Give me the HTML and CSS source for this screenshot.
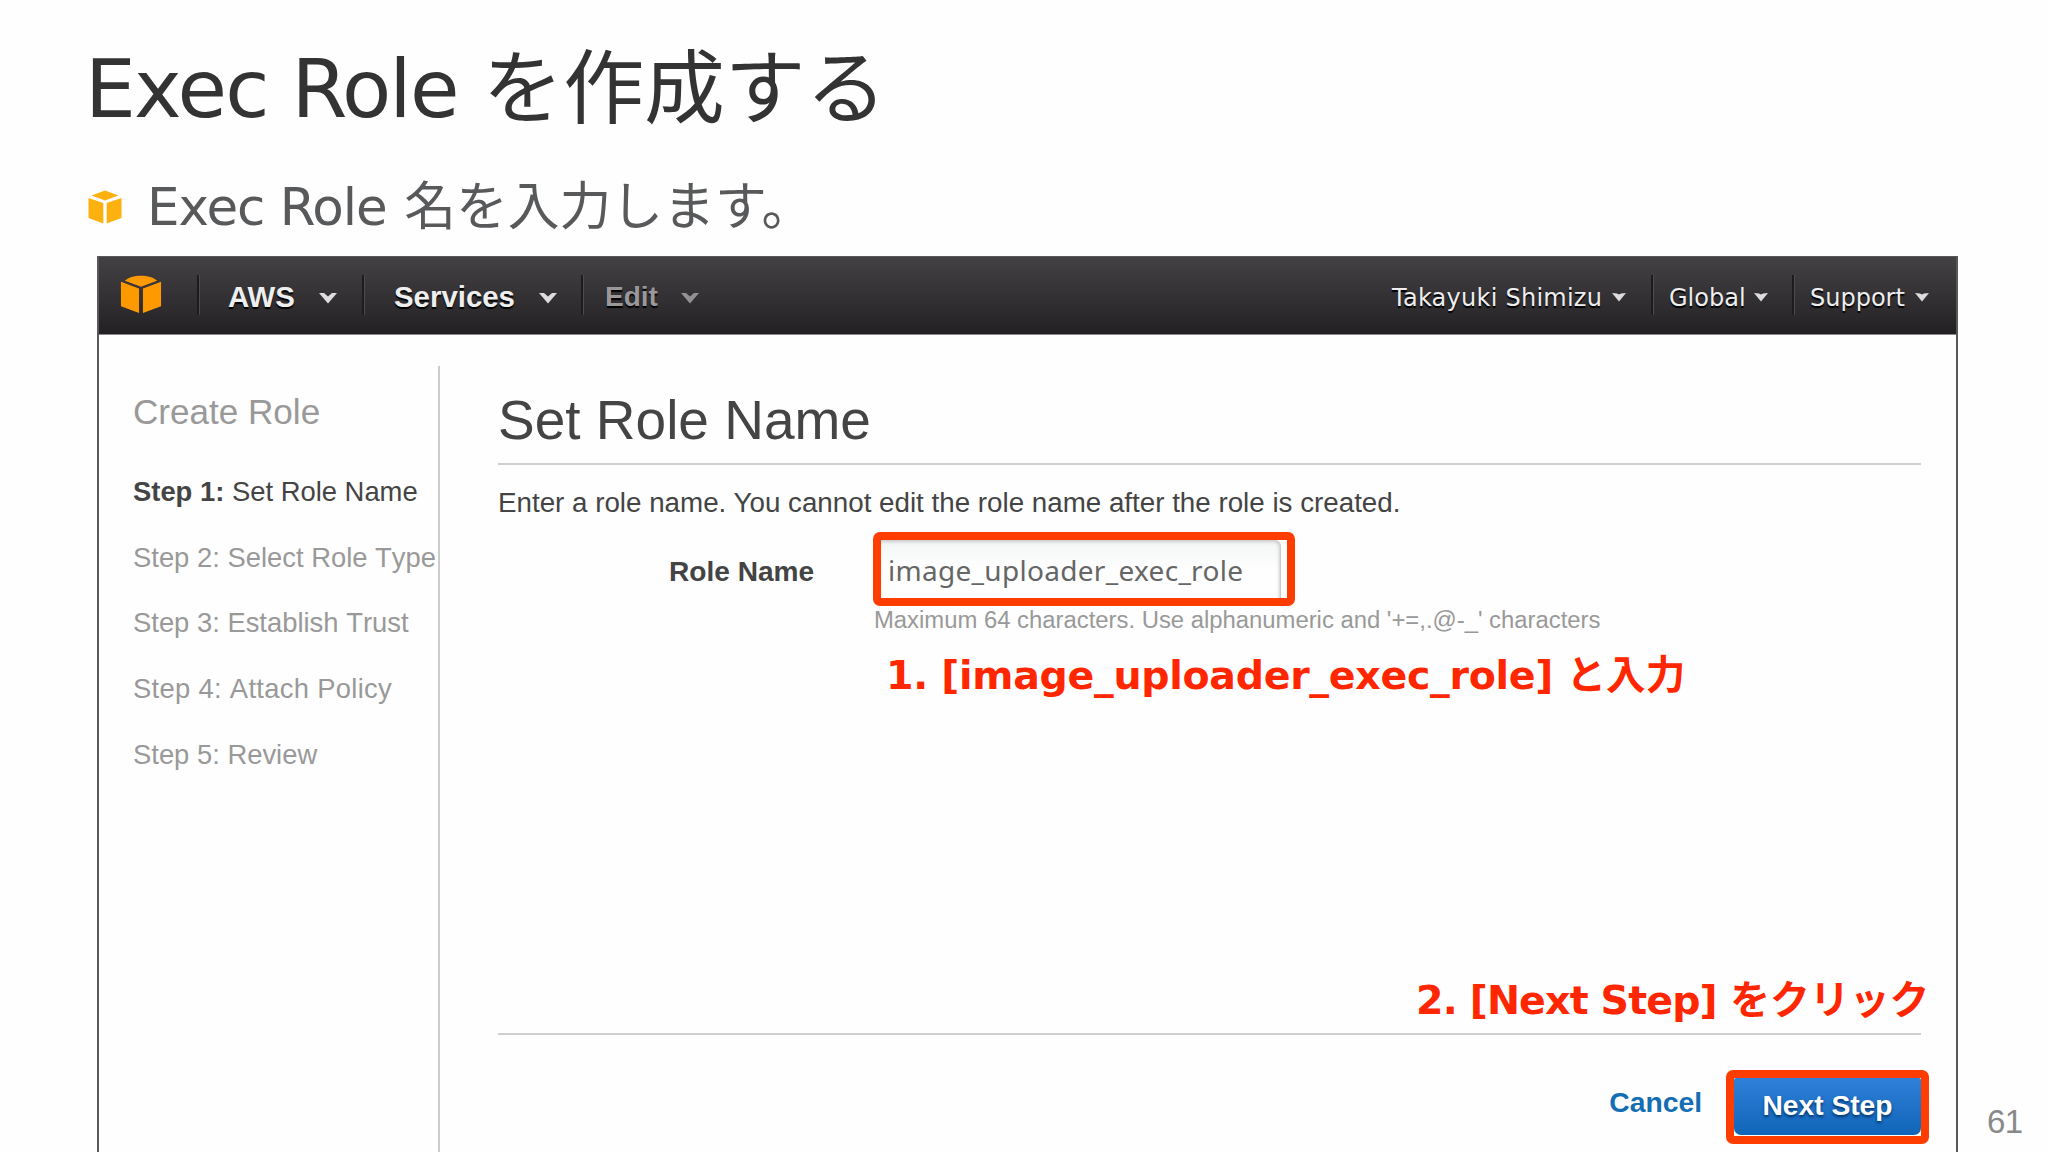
FILE: index.html
```
<!DOCTYPE html>
<html lang="ja">
<head>
    <meta charset="utf-8" />
    <title>Exec Role を作成する</title>
    <link rel="stylesheet" href="styles.css">
</head>
<body>
<div class="slide">

<h1 class="title">Exec Role <span class="jp">を作成する</span></h1>

<p class="lead">
    <svg class="bullet" viewBox="0 0 34 34">
        <path d="M3.5 5.5 L17 0.5 L30.5 5.5 L17 10.5Z"/>
        <path d="M0.5 8 L15.3 13 V33.5 L0.5 28Z"/>
        <path d="M33.5 8 L18.7 13 V33.5 L33.5 28Z"/>
    </svg>
    <span>Exec Role <span class="jp">名を入力します。</span></span>
</p>

<div class="stage">
    <div class="console">
        <!-- top bar -->
        <div class="nav">
            <svg class="logo" viewBox="0 0 45 44">
                <path d="M6 8.5 C12 1.5 33 1.5 39 8.5 L22.5 14.5Z"/>
                <path d="M2 9.5 L20.5 16.5 V41.5 L2 34.5Z"/>
                <path d="M43 9.5 L24.5 16.5 V41.5 L43 34.5Z"/>
            </svg>
            <div class="item aws">AWS <svg class="caret" viewBox="0 0 18 11"><path d="M0 0 H5 L9 3.5 L13 0 H18 L9 10.5Z"/></svg></div>
            <div class="item services">Services <svg class="caret" viewBox="0 0 18 11"><path d="M0 0 H5 L9 3.5 L13 0 H18 L9 10.5Z"/></svg></div>
            <div class="item edit">Edit <svg class="caret" viewBox="0 0 18 11"><path d="M0 0 H5 L9 3.5 L13 0 H18 L9 10.5Z"/></svg></div>
            <div class="account">
                <div class="link user">Takayuki Shimizu <svg class="caret" viewBox="0 0 14 9"><path d="M0 0 L5 0.5 L7 1.5 L9 0.5 L14 0 L7 8.5Z"/></svg></div>
                <div class="link region">Global <svg class="caret" viewBox="0 0 14 9"><path d="M0 0 L5 0.5 L7 1.5 L9 0.5 L14 0 L7 8.5Z"/></svg></div>
                <div class="link support">Support <svg class="caret" viewBox="0 0 14 9"><path d="M0 0 L5 0.5 L7 1.5 L9 0.5 L14 0 L7 8.5Z"/></svg></div>
            </div>
        </div>

        <div class="body">
            <!-- wizard steps -->
            <div class="sidebar">
                <h3>Create Role</h3>
                <ul>
                    <li class="active"><b>Step 1:</b> Set Role Name</li>
                    <li>Step 2: Select Role Type</li>
                    <li>Step 3: Establish Trust</li>
                    <li class="policy">Step 4: Attach Policy</li>
                    <li>Step 5: Review</li>
                </ul>
            </div>

            <div class="main">
                <h2>Set Role Name</h2>
                <p class="intro">Enter a role name. You cannot edit the role name after the role is created.</p>
                <div class="field">
                    <label>Role Name</label>
                    <div class="mark"><div class="input">image_uploader_exec_role</div></div>
                </div>
                <p class="hint">Maximum 64 characters. Use alphanumeric and '+=,.@-_' characters</p>
                <p class="note note1">1. [image_uploader_exec_role] <span class="jp">と入力</span></p>
                <p class="note note2"><span class="en">2. [Next Step]</span> <span class="jp">をクリック</span></p>
                <div class="actions">
                    <a class="cancel">Cancel</a>
                    <div class="mark"><div class="button">Next Step</div></div>
                </div>
            </div>
        </div>
    </div>
    <div class="page">61</div>
</div>

</div>
</body>
</html>
```
FILE: styles.css
```
* {
    box-sizing: border-box;
}
body {
    margin: 0;
    background: #fefefe;
    font-family: "Liberation Sans", Arial, sans-serif;
}
h1, h2, h3, p, ul {
    margin: 0;
    padding: 0;
    font-weight: normal;
}
.slide {
    display: flex;
    flex-direction: column;
    width: 2048px;
    height: 1152px;
    padding-top: 39px;
    overflow: hidden;
}

/* slide heading */
.jp {
    font-family: "Noto Sans CJK JP", sans-serif;
    line-height: 0;
}
.title {
    padding-left: 85px;
    font: 80.5px/100px "DejaVu Sans", "Noto Sans CJK JP", sans-serif;
    letter-spacing: -1.8px;
    color: #333;
    white-space: nowrap;
}
.title .jp {
    margin-left: 1px;
    font-size: 80.8px;
    letter-spacing: 0;
}
.lead {
    display: flex;
    margin-top: 38px;
    padding-left: 88px;
    font: 51.5px/60px "DejaVu Sans", "Noto Sans CJK JP", sans-serif;
    letter-spacing: -1px;
    color: #58595b;
    white-space: nowrap;
}
.lead .jp {
    margin-left: 2px;
    font-size: 51.8px;
    letter-spacing: 0;
}
.bullet {
    width: 34px;
    height: 34px;
    margin: 13px 25px 0 0;
    fill: #fcb10f;
}

/* console window */
.stage {
    display: flex;
    flex: 1;
    margin-top: 19px;
    padding-left: 97px;
}
.console {
    width: 1861px;
    border: 2px solid #58585b;
    border-width: 1px 2px 0;
}
.nav {
    display: flex;
    height: 78px;
    background: linear-gradient(#434144, #2d2b2e 70%, #222023);
    border-bottom: 1px solid #8a888b;
    color: #eee;
    text-shadow: 0 2px 1px #000;
}
.logo {
    width: 44px;
    height: 44px;
    margin: 15px 34px 0 20px;
    fill: #ff9900;
}
.item, .link {
    display: flex;
    height: 40px;
    margin-top: 18px;
    border-left: 2px solid #1d1b1e;
    box-shadow: inset 1px 0 #4d4b4e;
    white-space: nowrap;
}
.item {
    font-size: 29.4px;
    line-height: 44px;
    font-weight: bold;
}
.caret {
    fill: #ddd;
}
.item .caret {
    width: 18px;
    height: 11px;
    margin: 18px 0 0 24px;
}
.aws {
    width: 165px;
    padding-left: 29px;
}
.services {
    width: 219px;
    padding-left: 30px;
}
.edit {
    padding-left: 22px;
    color: #9a989b;
    font-size: 28px;
}
.edit .caret {
    margin-left: 23px;
    fill: #929093;
}
.account {
    display: flex;
    margin-left: auto;
    font: 24px/46px "DejaVu Sans", sans-serif;
}
.link .caret {
    width: 14px;
    height: 9px;
    margin: 18px 0 0 10px;
}
.user {
    width: 259px;
    border: 0;
    box-shadow: none;
    letter-spacing: 0.25px;
}
.region {
    width: 141px;
    padding-left: 16px;
}
.region .caret {
    margin-left: 8px;
}
.support {
    width: 164px;
    padding-left: 16px;
}

.body {
    display: grid;
    grid-template-columns: 341px minmax(0, 1fr);
    height: 817px;
    background: #fefefe;
}
.sidebar {
    margin-top: 31px;
    padding: 26px 0 0 34px;
    border-right: 2px solid #ccc;
    color: #999;
    white-space: nowrap;
}
.sidebar h3 {
    font-size: 35.1px;
    line-height: 40px;
}
.sidebar ul {
    margin-top: 27px;
    list-style: none;
    font-size: 27.4px;
    line-height: 65.7px;
    font-kerning: none;
}
.sidebar .active {
    color: #444;
}
.sidebar .policy {
    letter-spacing: 0.3px;
}

/* form */
.main {
    padding: 53px 35px 0 58px;
    color: #444;
    white-space: nowrap;
}
.main h2 {
    padding-bottom: 11px;
    border-bottom: 2px solid #d0ced2;
    font-size: 55px;
    line-height: 64px;
}
.intro {
    margin-top: 22px;
    font-size: 27.75px;
    line-height: 32px;
}
.field {
    display: flex;
    margin-top: 13px;
}
.field label {
    width: 375px;
    padding-left: 171px;
    font-size: 28.1px;
    font-weight: bold;
    line-height: 80px;
}
.mark {
    height: 74px;
    background: #fff;
    border: 8px solid #ff3d00;
    border-radius: 7px;
}
.field .mark {
    width: 422px;
}
.input {
    width: 400px;
    height: 58px;
    padding-left: 7px;
    border-right: 1px solid #ccc;
    border-top-right-radius: 6px;
    background: linear-gradient(#f3f5f5, #fefefe 50%);
    box-shadow: inset -1px 2px 3px #ccc;
    color: #666;
    font: 28px/60px "Noto Sans", sans-serif;
    letter-spacing: 0.3px;
}
.hint {
    margin: -5px 0 0 376px;
    font-size: 23.85px;
    line-height: 26px;
    color: #999;
}
.note {
    font: bold 39.5px/50px "DejaVu Sans", "Noto Sans CJK JP", sans-serif;
    letter-spacing: -0.3px;
    color: #ff2600;
}
.note .jp {
    font-size: 39.6px;
    letter-spacing: 0;
}
.note1 {
    margin: 17px 0 0 388px;
}
.note2 {
    margin: 275px 0 0 918px;
}
.note2 .en {
    letter-spacing: -0.85px;
}
.note2 .jp {
    font-size: 39.8px;
}
.actions {
    display: flex;
    justify-content: flex-end;
    margin: 8px 0 0;
    padding-top: 35px;
    border-top: 2px solid #d0d0d2;
}
.cancel {
    margin-right: 24px;
    font-size: 28.3px;
    font-weight: bold;
    line-height: 65px;
    color: #146eb4;
}
.actions .mark {
    width: 203px;
    margin-right: -8px;
}
.button {
    height: 57px;
    border-radius: 2px 2px 7px 7px;
    background: linear-gradient(#2f80d9, #1065b8);
    color: #fff;
    font-size: 28.2px;
    font-weight: bold;
    line-height: 55px;
    text-align: center;
    text-shadow: 0 2px 3px #003366;
}
.page {
    align-self: flex-end;
    margin-left: 29px;
    font-size: 33px;
    line-height: 60px;
    letter-spacing: -0.5px;
    color: #898989;
}
```
